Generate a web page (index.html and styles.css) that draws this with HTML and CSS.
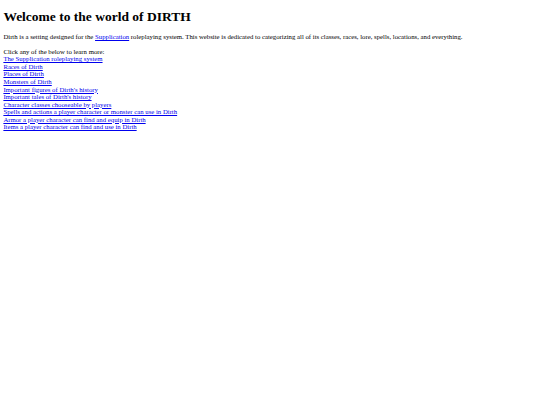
FILE: index.html
```html
<!DOCTYPE html>
<html lang="en">
<head>
<meta charset="utf-8">
<title>Dirth</title>
<link rel="stylesheet" href="styles.css">
</head>
<body class="page">
<h1 class="title">Welcome to the world of DIRTH</h1>
<p class="intro">Dirth is a setting designed for the <a href="#">Supplication</a> roleplaying system. This website is dedicated to categorizing all of its classes, races, lore, spells, locations, and everything.</p>
<div class="menu">
<div class="menu-label">Click any of the below to learn more:</div>
<a class="menu-link" href="#">The Supplication roleplaying system</a>
<a class="menu-link" href="#">Races of Dirth</a>
<a class="menu-link" href="#">Places of Dirth</a>
<a class="menu-link" href="#">Monsters of Dirth</a>
<a class="menu-link" href="#">Important figures of Dirth's history</a>
<a class="menu-link" href="#">Important tales of Dirth's history</a>
<a class="menu-link" href="#">Character classes chooseable by players</a>
<a class="menu-link" href="#">Spells and actions a player character or monster can use in Dirth</a>
<a class="menu-link" href="#">Armor a player character can find and equip in Dirth</a>
<a class="menu-link" href="#">Items a player character can find and use in Dirth</a>
</div>
</body>
</html>
```
FILE: styles.css
```css
html { background: #fff; }
.page {
  margin: 0;
  padding: 0 3.375px;
  font-family: "Liberation Serif", "Times New Roman", serif;
  font-size: 6.75px;
  line-height: 7.56px;
  color: #000;
}
.title {
  font-size: 13.5px;
  line-height: 15.3px;
  font-weight: bold;
  margin: 9.05px 0;
}
.intro {
  margin: 6.75px 0;
}
a { color: #0000ee; text-decoration: underline; }
.menu-link { display: block; width: max-content; }
```
